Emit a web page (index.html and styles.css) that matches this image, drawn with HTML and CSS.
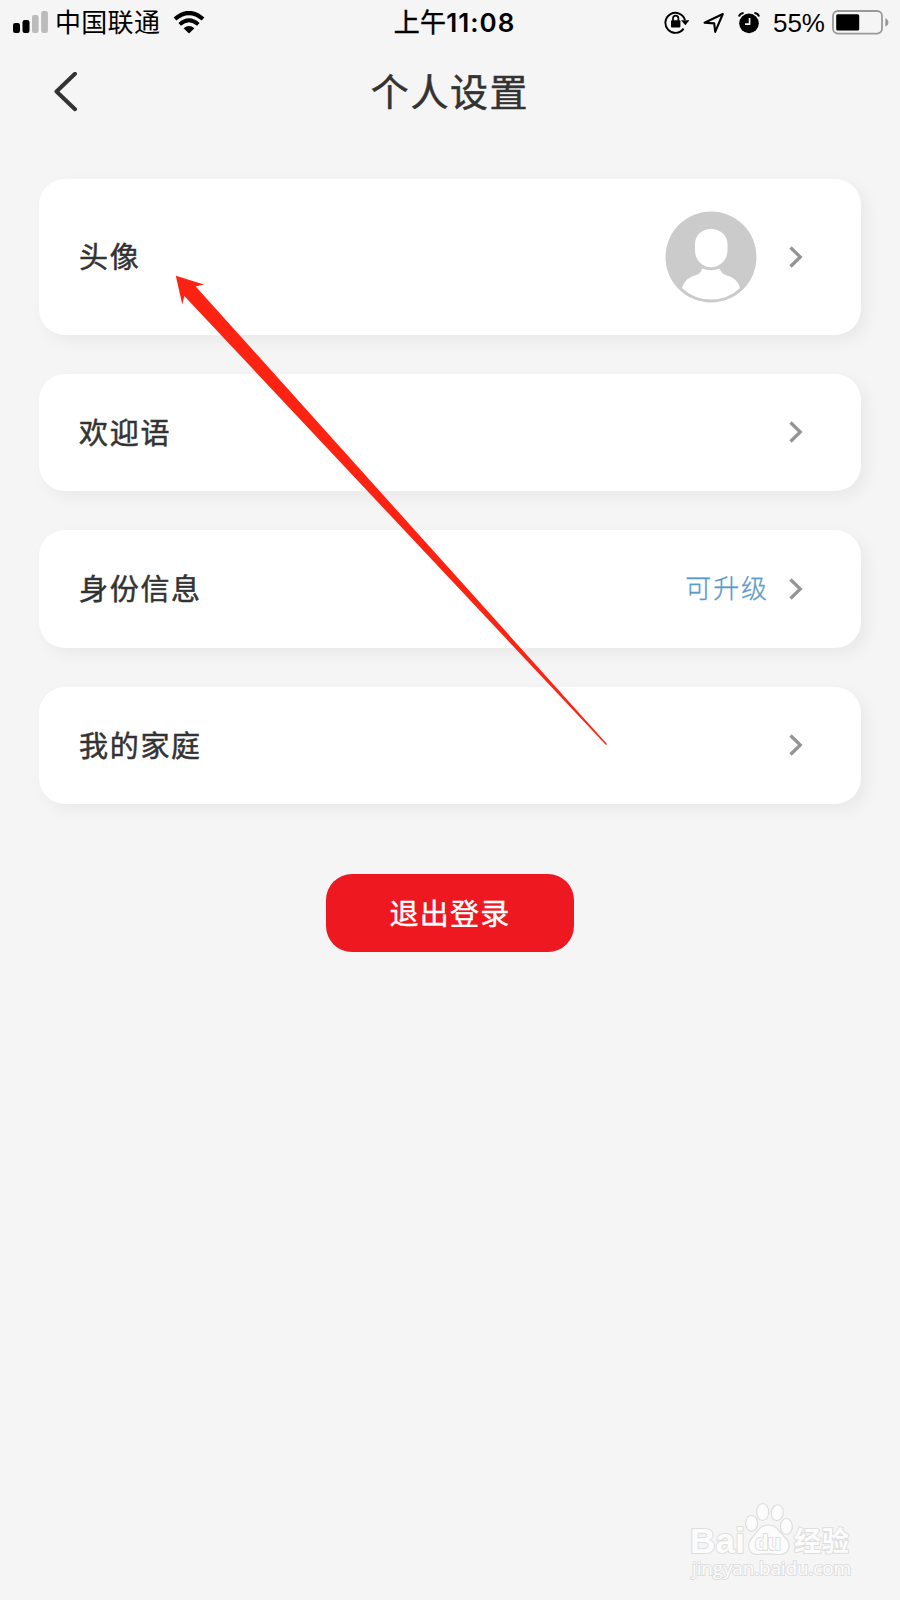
FILE: index.html
```html
<!DOCTYPE html>
<html lang="zh-CN">

<head>
    <meta charset="UTF-8">
    <title>个人设置</title>
    <link rel="stylesheet" href="styles.css">
</head>

<body>
    <!-- Status bar -->
    <div class="status-bar">
        <div class="status-left">
            <svg class="signal" width="36" height="23" viewBox="0 0 36 23">
                <rect x="0" y="12" width="7" height="10" rx="2.2" />
                <rect x="9.5" y="9" width="7" height="13" rx="2.2" />
                <rect x="19" y="4" width="6.6" height="18" rx="2.2" fill="#bbb" />
                <rect x="28.2" y="0" width="6.7" height="22" rx="2.2" fill="#bbb" />
            </svg>
            <span class="carrier">中国联通</span>
            <svg class="wifi" width="32" height="24" viewBox="0 0 32 24" fill="none" stroke="#000">
                <path d="M2 8 Q16 -4 30 8" stroke-width="4.2" />
                <path d="M6.7 13.4 Q16 5.2 25.3 13.4" stroke-width="3.8" />
                <path d="M10.6 17.3 Q16 12.7 21.4 17.3 L16 22.6 Z" fill="#000" stroke="none" />
            </svg>
        </div>
        <div class="status-time">上午<b>11:08</b></div>
        <div class="status-right">
            <svg width="26" height="24" viewBox="0 0 26 24">
                <path d="M19.6 17.6 A10 10 0 1 1 21 9" fill="none" stroke="#000" stroke-width="1.9" />
                <path d="M17 9.2 H25.4 L21.3 14.2 Z" />
                <rect x="7" y="9.3" width="9.4" height="7.2" rx="1" />
                <path d="M9 10 V7.4 A2.7 2.7 0 0 1 14.4 7.4 V10" fill="none" stroke="#000" stroke-width="1.7" />
            </svg>
            <svg class="location" width="22" height="22" viewBox="0 0 22 22">
                <path d="M1.6 10.8 L19.8 2 L12.2 19.8 L11.2 11.4 Z" fill="none" stroke="#000" stroke-width="2.1" stroke-linejoin="round" />
            </svg>
            <svg class="alarm" width="22" height="22" viewBox="0 0 22 22">
                <circle cx="11" cy="11.4" r="9.8" />
                <path d="M1 4.5 Q1.8 1.4 5.6 1 M16.4 1 Q20.2 1.4 21 4.5" fill="none" stroke="#000" stroke-width="2" />
                <path d="M11.6 6 V12.2 H7" fill="none" stroke="#f5f5f5" stroke-width="1.7" />
            </svg>
            <span class="percent">55%</span>
            <svg class="battery" width="57" height="25" viewBox="0 0 57 25">
                <rect x="1" y="1" width="49" height="22.6" rx="5" fill="none" stroke="#999" stroke-width="1.8" />
                <rect x="4.2" y="4.2" width="23" height="16.2" rx="1.5" />
                <path d="M53.3 8.3 Q56.6 9.5 56.4 12.4 Q56.6 15.2 53.3 16.5 Z" fill="#999" />
            </svg>
        </div>
    </div>

    <!-- Title bar -->
    <div class="nav-bar">
        <svg class="back" width="24" height="40" viewBox="0 0 24 40">
            <path d="M21 1.8 L2.5 19.5 L21 37.2" fill="none" stroke="#333" stroke-width="4" stroke-linecap="round" stroke-linejoin="round" />
        </svg>
        <h1>个人设置</h1>
    </div>

    <div class="card-list">
        <div class="card card-avatar">
            <span class="label">头像</span>
            <svg class="avatar" width="92" height="92" viewBox="0 0 92 92">
                <circle cx="46" cy="46" r="45.5" fill="#cbcbcb" />
                <path d="M46 18 C56 18 62.5 25 62.5 33 V39 C62.5 50 54 56.3 46 56.3 C38 56.3 30 50 30 39 V33 C30 25 36 18 46 18 Z" fill="#fff" />
                <path d="M37 57.4 Q46 61 55 57.4 C56 63 60 63.6 65 65.5 Q73.5 69.5 75 77 Q63 88.5 46 88.5 Q29 88.5 17 77 Q18.5 69.5 27 65.5 C32 63.6 36 63 37 57.4 Z" fill="#fff" />
            </svg>
            <svg class="chevron" width="14" height="22" viewBox="0 0 14 22">
                <path d="M1.5 1.5 L11.3 11 L1.5 20.5" />
            </svg>
        </div>
        <div class="card">
            <span class="label">欢迎语</span>
            <svg class="chevron" width="14" height="22" viewBox="0 0 14 22">
                <path d="M1.5 1.5 L11.3 11 L1.5 20.5" />
            </svg>
        </div>
        <div class="card">
            <span class="label">身份信息</span>
            <span class="hint">可升级</span>
            <svg class="chevron" width="14" height="22" viewBox="0 0 14 22">
                <path d="M1.5 1.5 L11.3 11 L1.5 20.5" />
            </svg>
        </div>
        <div class="card">
            <span class="label">我的家庭</span>
            <svg class="chevron" width="14" height="22" viewBox="0 0 14 22">
                <path d="M1.5 1.5 L11.3 11 L1.5 20.5" />
            </svg>
        </div>
    </div>

    <button class="logout">退出登录</button>

    <!-- Arrow pointing at the avatar row -->
    <svg class="arrow" width="900" height="800" viewBox="0 0 900 800">
        <path d="M175.8 275.8 L204 284.5 L195.7 286.5 L607 744 L606 745 L184.3 296 L182.3 304.5 Z" fill="#fc2312" />
    </svg>

    <!-- Watermark -->
    <svg class="watermark" width="180" height="84" viewBox="0 0 180 84">
        <g fill="#fcfcfc" stroke="#dedede" stroke-width="1.2">
            <text class="wm-logo" x="8" y="53" textLength="55">Bai</text>
            <ellipse cx="69.6" cy="23.3" rx="6" ry="8" />
            <ellipse cx="80.7" cy="12" rx="6" ry="8.5" />
            <ellipse cx="95.3" cy="12.7" rx="6" ry="8" transform="rotate(8 95.3 12.7)" />
            <ellipse cx="104.3" cy="26.5" rx="6" ry="8" />
            <path d="M86.5 25 C95.5 25 96.5 32 102.5 37 C111 45 106.5 55 96.5 54.5 C88.5 53.5 83.5 53.5 76.5 54.5 C66.5 55 63.5 45 70.5 37 C76.5 31 77.5 25 86.5 25 Z" />
            <text class="wm-du" x="73" y="49.5" textLength="26">du</text>
            <text class="wm-cn" x="112" y="51" textLength="55">经验</text>
            <text class="wm-url" x="10" y="75" textLength="159">jingyan.baidu.com</text>
        </g>
    </svg>
</body>

</html>
```
FILE: styles.css
```css
* {
    box-sizing: border-box;
}

body {
    margin: 0;
    height: 1600px;
    position: relative;
    overflow: hidden;
    background-color: #f5f5f5;
    color: #333;
    font-family: "Liberation Sans", "Noto Sans CJK SC", sans-serif;
}

svg {
    display: block;
    flex-shrink: 0;
}

/* Status bar */
.status-bar {
    display: grid;
    grid-template-columns: 1fr auto 1fr;
    align-items: center;
    height: 44px;
    padding: 0 11px 0 13px;
    color: #000;
    font-size: 26px;
    line-height: 44px;
}

.status-left,
.status-right {
    display: flex;
    align-items: center;
}

.status-right {
    justify-content: flex-end;
}

.carrier {
    margin-left: 6px;
    padding-top: 1px;
    letter-spacing: 0.3px;
}

.wifi {
    margin-left: 13px;
}

.status-time {
    padding: 1px 0 0 7px;
    font-family: Inter, "Noto Sans CJK SC", sans-serif;
    letter-spacing: 0.3px;
    -webkit-text-stroke: 0.4px #000;
}

.status-time b {
    font-weight: 600;
    letter-spacing: 1px;
    -webkit-text-stroke: 0;
}

.location {
    margin-left: 13px;
}

.alarm {
    margin-left: 13px;
}

.percent {
    margin: 1px 7px 0 13px;
}

/* Title bar */
.nav-bar {
    display: grid;
    grid-template-columns: 1fr auto 1fr;
    align-items: center;
    height: 96px;
    padding: 0 54px;
}

h1 {
    margin: 0;
    padding-bottom: 5px;
    font-size: 38px;
    font-weight: 400;
    letter-spacing: 1.6px;
    -webkit-text-stroke: 0.5px #333;
}

/* Setting rows */
.card-list {
    display: flex;
    flex-direction: column;
    gap: 39px;
    padding: 38.5px 39px 0;
}

.card {
    display: flex;
    align-items: center;
    height: 117.5px;
    padding: 0 58px 0 40px;
    background-color: #fff;
    border-radius: 26px;
    box-shadow: 6px 6px 16px rgba(0, 0, 0, 0.05);
}

.card-avatar {
    height: 156px;
}

.label {
    flex: 1;
    padding-bottom: 3px;
    font-size: 29px;
    letter-spacing: 1.7px;
    -webkit-text-stroke: 0.5px #333;
}

.avatar {
    margin-right: 32px;
}

.hint {
    margin-right: 20px;
    padding-bottom: 4px;
    color: #5b9bcc;
    font-size: 26px;
    font-weight: 300;
    letter-spacing: 1.9px;
    -webkit-text-stroke: 0.3px #5b9bcc;
}

.chevron path {
    fill: none;
    stroke: #949494;
    stroke-width: 3.2;
}

.logout {
    display: block;
    width: 248px;
    height: 78px;
    margin: 69.5px auto 0;
    padding: 0 0 2px;
    border: none;
    border-radius: 26px;
    background-color: #ed1820;
    color: #fff;
    font-family: inherit;
    font-size: 29px;
    letter-spacing: 1.2px;
    -webkit-text-stroke: 0.4px #fff;
}

.arrow {
    position: absolute;
    top: 0;
    left: 0;
    pointer-events: none;
}

/* Watermark */
.watermark {
    position: absolute;
    right: 38px;
    bottom: 16px;
}

.watermark text {
    paint-order: stroke;
    stroke-width: 2;
}

.wm-logo {
    font: bold 35px "Liberation Sans", sans-serif;
}

.wm-du {
    font: bold 22px "Liberation Sans", sans-serif;
}

.wm-cn {
    font: bold 27px "Noto Sans CJK SC", sans-serif;
}

.wm-url {
    font: 19px "Open Sans", sans-serif;
}
```
